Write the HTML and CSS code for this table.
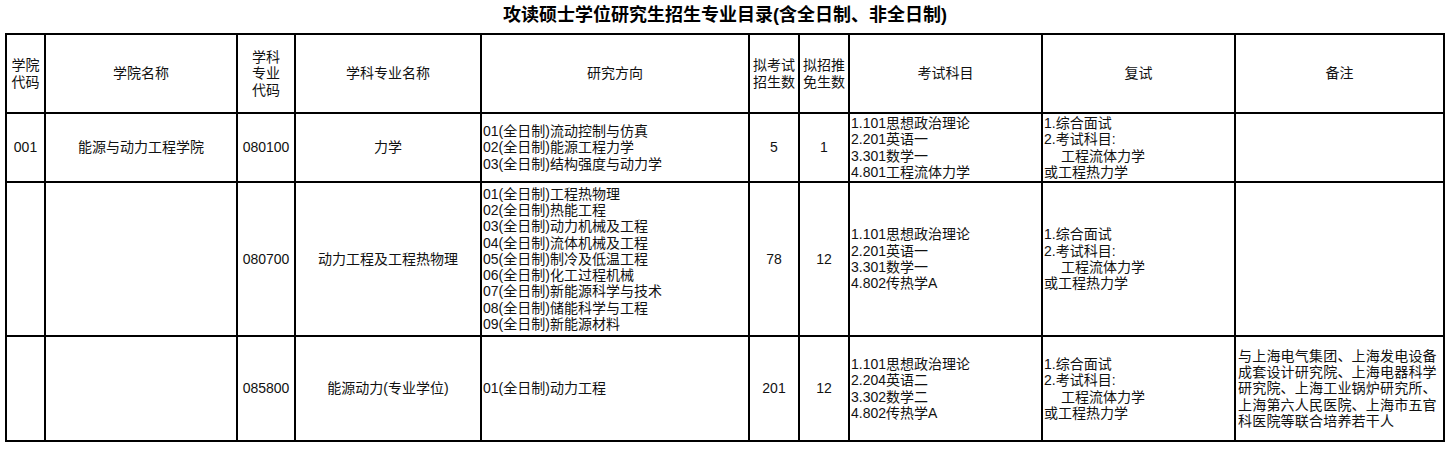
FILE: index.html
```html
<!DOCTYPE html>
<html lang="zh-CN">
<head>
<meta charset="utf-8">
<title>攻读硕士学位研究生招生专业目录</title>
<link rel="stylesheet" href="styles.css">
</head>
<body>
<div class="page">
  <div class="title">攻读硕士学位研究生招生专业目录(含全日制、非全日制)</div>
  <table class="catalog">
    <colgroup>
      <col class="w-code">
      <col class="w-school">
      <col class="w-mcode">
      <col class="w-major">
      <col class="w-dir">
      <col class="w-num">
      <col class="w-num">
      <col class="w-exam">
      <col class="w-retest">
      <col class="w-note">
    </colgroup>
    <thead>
      <tr class="row-head">
        <th>学院<br>代码</th>
        <th>学院名称</th>
        <th>学科<br>专业<br>代码</th>
        <th>学科专业名称</th>
        <th>研究方向</th>
        <th>拟考试<br>招生数</th>
        <th>拟招推<br>免生数</th>
        <th>考试科目</th>
        <th>复试</th>
        <th>备注</th>
      </tr>
    </thead>
    <tbody>
      <tr class="row-1">
        <td>001</td>
        <td>能源与动力工程学院</td>
        <td>080100</td>
        <td>力学</td>
        <td class="left">01(全日制)流动控制与仿真<br>02(全日制)能源工程力学<br>03(全日制)结构强度与动力学</td>
        <td>5</td>
        <td>1</td>
        <td class="left">1.101思想政治理论<br>2.201英语一<br>3.301数学一<br>4.801工程流体力学</td>
        <td class="left">1.综合面试<br>2.考试科目:<br><span class="indent">工程流体力学</span><br>或工程热力学</td>
        <td class="left"></td>
      </tr>
      <tr class="row-2">
        <td></td>
        <td></td>
        <td>080700</td>
        <td>动力工程及工程热物理</td>
        <td class="left">01(全日制)工程热物理<br>02(全日制)热能工程<br>03(全日制)动力机械及工程<br>04(全日制)流体机械及工程<br>05(全日制)制冷及低温工程<br>06(全日制)化工过程机械<br>07(全日制)新能源科学与技术<br>08(全日制)储能科学与工程<br>09(全日制)新能源材料</td>
        <td>78</td>
        <td>12</td>
        <td class="left">1.101思想政治理论<br>2.201英语一<br>3.301数学一<br>4.802传热学A</td>
        <td class="left">1.综合面试<br>2.考试科目:<br><span class="indent">工程流体力学</span><br>或工程热力学</td>
        <td class="left"></td>
      </tr>
      <tr class="row-3">
        <td></td>
        <td></td>
        <td>085800</td>
        <td>能源动力(专业学位)</td>
        <td class="left">01(全日制)动力工程</td>
        <td>201</td>
        <td>12</td>
        <td class="left">1.101思想政治理论<br>2.204英语二<br>3.302数学二<br>4.802传热学A</td>
        <td class="left">1.综合面试<br>2.考试科目:<br><span class="indent">工程流体力学</span><br>或工程热力学</td>
        <td class="left note">与上海电气集团、上海发电设备成套设计研究院、上海电器科学研究院、上海工业锅炉研究所、上海第六人民医院、上海市五官科医院等联合培养若干人</td>
      </tr>
    </tbody>
  </table>
</div>
</body>
</html>
```
FILE: styles.css
```css
html, body {
  margin: 0;
  padding: 0;
  background: #ffffff;
}

body {
  font-family: "Liberation Sans", "Noto Sans CJK SC", sans-serif;
  color: #111111;
}

.page {
  padding: 0 0 0 5px;
}

.title {
  width: 1440px;
  height: 33px;
  line-height: 30px;
  text-align: center;
  font-size: 18px;
  font-weight: bold;
  color: #000000;
}

.catalog {
  width: 1440px;
  table-layout: fixed;
  border-collapse: collapse;
  font-size: 14px;
  line-height: 16.3px;
}

.catalog th,
.catalog td {
  border: 2px solid #000000;
  padding: 0 1px;
  text-align: center;
  vertical-align: middle;
  font-weight: normal;
  overflow: hidden;
}

.catalog td.left {
  text-align: left;
  padding-left: 1px;
}

.catalog td.note {
  padding-left: 2px;
  padding-right: 2px;
  letter-spacing: 0.2px;
}

.indent {
  padding-left: 17px;
}

.w-code { width: 39px; }
.w-school { width: 192px; }
.w-mcode { width: 58px; }
.w-major { width: 186px; }
.w-dir { width: 268px; }
.w-num { width: 50px; }
.w-exam { width: 193px; }
.w-retest { width: 193px; }
.w-note { width: 209px; }

.row-head { height: 79px; }
.row-1 { height: 69px; }
.row-2 { height: 154px; }
.row-3 { height: 105px; }
```
